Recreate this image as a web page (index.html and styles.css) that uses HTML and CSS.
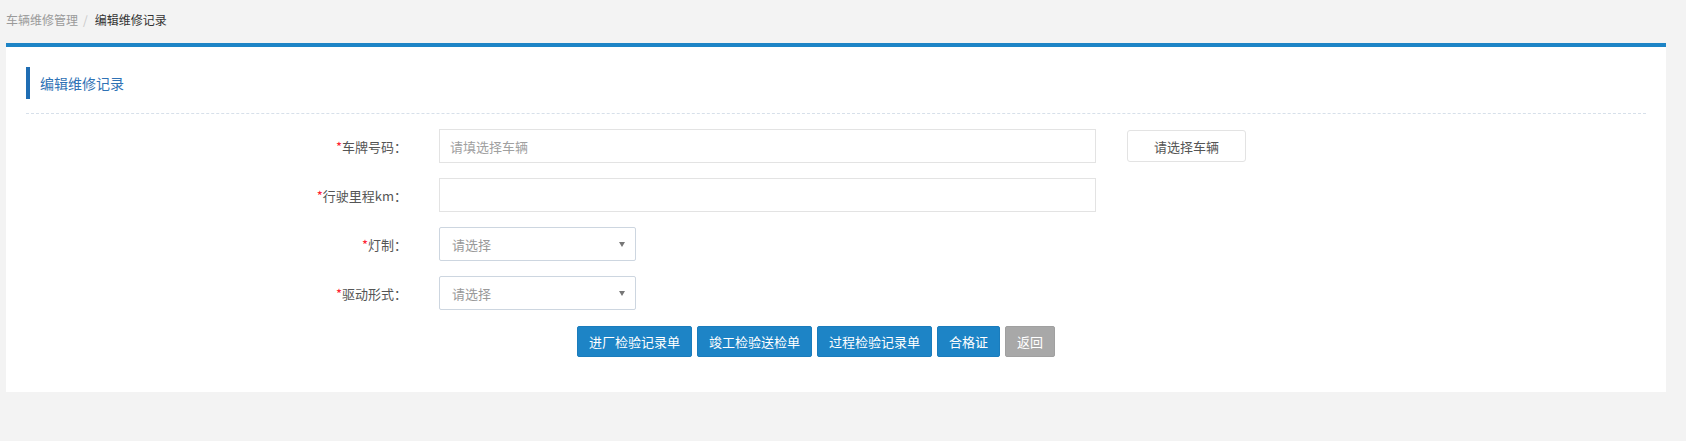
FILE: index.html
```html
<!DOCTYPE html>
<html lang="zh-CN">
<head>
  <meta charset="UTF-8">
  <title>编辑维修记录</title>
  <link rel="stylesheet" href="styles.css">
</head>
<body>
  <div class="breadcrumb">
    <span class="crumb">车辆维修管理</span><span class="sep">/</span><span class="crumb current">编辑维修记录</span>
  </div>

  <div class="card">
    <div class="title">编辑维修记录</div>
    <div class="divider"></div>

    <form class="form">
      <div class="row">
        <label class="label"><i>*</i>车牌号码：</label>
        <input class="input" type="text" placeholder="请填选择车辆">
        <button type="button" class="btn-plain">请选择车辆</button>
      </div>
      <div class="row">
        <label class="label"><i>*</i>行驶里程km：</label>
        <input class="input" type="text">
      </div>
      <div class="row">
        <label class="label"><i>*</i>灯制：</label>
        <div class="select"><span>请选择</span><b class="caret"></b></div>
      </div>
      <div class="row">
        <label class="label"><i>*</i>驱动形式：</label>
        <div class="select"><span>请选择</span><b class="caret"></b></div>
      </div>

      <div class="actions">
        <button type="button" class="btn">进厂检验记录单</button>
        <button type="button" class="btn">竣工检验送检单</button>
        <button type="button" class="btn">过程检验记录单</button>
        <button type="button" class="btn">合格证</button>
        <button type="button" class="btn gray">返回</button>
      </div>
    </form>
  </div>
</body>
</html>
```

FILE: styles.css
```css
body { margin: 0; background: #f3f3f3; font-family: "Noto Sans CJK SC", "Liberation Sans", sans-serif; color: #555; }
.breadcrumb { height: 43px; line-height: 40px; padding-left: 6px; font-size: 12px; }
.crumb { color: #9a9a9a; }
.crumb.current { color: #333; }
.sep { color: #c8c8c8; margin: 0 7px 0 5px; }

.card { margin: 0 20px 0 6px; background: #fff; border-top: 4px solid #1d84c6; padding: 20px 20px 35px; }
.title { border-left: 4px solid #1f6db3; height: 32px; line-height: 32px; padding-left: 10px; font-size: 14px; color: #2f72b5; }
.divider { border-top: 1px dashed #d7e0ea; margin-top: 14px; }

.form { margin-top: 15px; }
.row { display: flex; align-items: center; height: 34px; margin-bottom: 15px; }
.label { width: 381px; text-align: right; font-size: 13px; color: #555; margin-right: 32px; }
.label i { font-style: normal; color: #f23; }
.input { box-sizing: border-box; width: 657px; height: 34px; border: 1px solid #e3e3e3; padding: 0 10px; font-size: 13px; font-family: inherit; color: #555; outline: none; }
.input::placeholder { color: #a0a0a0; }
.btn-plain { box-sizing: border-box; margin-left: 31px; width: 119px; height: 32px; background: #fff; border: 1px solid #e3e3e3; border-radius: 3px; font-size: 13px; font-family: inherit; color: #555; }

.select { box-sizing: border-box; width: 197px; height: 34px; border: 1px solid #cdd6e0; border-radius: 2px; display: flex; align-items: center; justify-content: space-between; padding: 0 10px 0 12px; font-size: 13px; color: #999; }
.caret { width: 0; height: 0; border-left: 3px solid transparent; border-right: 3px solid transparent; border-top: 5px solid #777; }

.actions { display: flex; gap: 5px; padding-left: 551px; margin-top: 16px; }
.btn { box-sizing: border-box; height: 31px; padding: 0 11px; border: 1px solid #1a7cbc; border-radius: 2px; background: #1d84c6; color: #fff; font-size: 13px; font-family: inherit; }
.btn.gray { background: #a8a8a8; border-color: #a0a0a0; }
```
